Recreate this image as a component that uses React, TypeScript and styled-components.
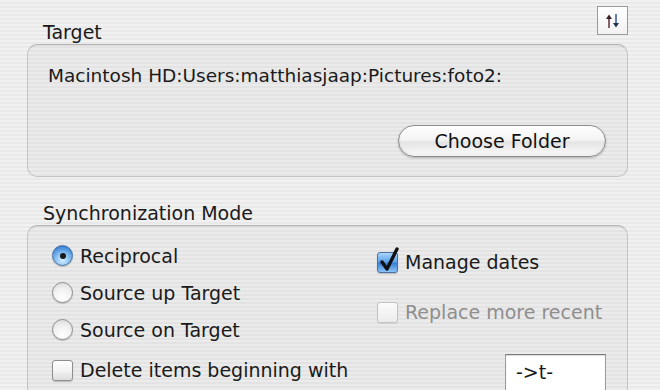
import React from "react";
import styled, { createGlobalStyle } from "styled-components";

const GlobalStyle = createGlobalStyle`
  html, body {
    margin: 0;
    padding: 0;
    height: 100%;
    overflow: hidden;
  }
  body {
    font-family: "DejaVu Sans", "Liberation Sans", sans-serif;
    background-color: #eeeeee;
    background-image: repeating-linear-gradient(
      to bottom,
      #f1f1f1 0px,
      #f1f1f1 2px,
      #e9e9e9 2px,
      #e9e9e9 4px
    );
    color: #1a1a1a;
  }
`;

const Page = styled.div`
  width: 601px;
  margin-left: 27px;
  padding-top: 6px;
  display: flex;
  flex-direction: column;
`;

const SectionHead = styled.div<{ h: number }>`
  display: flex;
  align-items: flex-end;
  justify-content: space-between;
  height: ${(p) => p.h}px;
  padding-left: 16px;
`;

const Label = styled.div`
  font-size: 19px;
  line-height: 20px;
  padding-bottom: 2px;
`;

const SortButton = styled.div`
  width: 29px;
  height: 27px;
  border: 1px solid #9a9a9a;
  background: linear-gradient(#ffffff, #f2f2f2);
  display: flex;
  align-items: center;
  justify-content: center;
  margin-bottom: 9px;
`;

const GroupBox = styled.div`
  border: 1px solid #c4c4c4;
  border-top-color: #b4b4b4;
  border-radius: 10px;
  background: rgba(0, 0, 0, 0.025);
  box-shadow: inset 0 1px 1px rgba(0, 0, 0, 0.06);
`;

const TargetBox = styled(GroupBox)`
  height: 133px;
  display: flex;
  flex-direction: column;
  justify-content: space-between;
  padding: 21px 20px 19px 20px;
  box-sizing: border-box;
`;

const PathText = styled.div`
  font-size: 18.5px;
  line-height: 20px;
`;

const AquaButton = styled.button`
  align-self: flex-end;
  width: 208px;
  height: 32px;
  border-radius: 16px;
  border: 1px solid #8c8c8c;
  background: linear-gradient(
    #ffffff 0%,
    #f4f4f4 45%,
    #e4e4e4 55%,
    #f6f6f6 90%,
    #ffffff 100%
  );
  box-shadow: 0 1px 2px rgba(0, 0, 0, 0.25),
    inset 0 -2px 3px rgba(0, 0, 0, 0.06);
  font-family: "DejaVu Sans", "Liberation Sans", sans-serif;
  font-size: 19px;
  color: #111;
  padding: 0;
  margin-right: 1px;
`;

const SyncBox = styled(GroupBox)`
  height: 200px;
  box-sizing: border-box;
  padding: 11px 20px 0 24px;
  display: grid;
  grid-template-columns: 325px 1fr;
  border-bottom-left-radius: 0;
  border-bottom-right-radius: 0;
`;

const Column = styled.div`
  display: flex;
  flex-direction: column;
`;

const Option = styled.div<{ disabled?: boolean; h: number }>`
  display: flex;
  align-items: center;
  gap: 7px;
  height: ${(p) => p.h}px;
  font-size: 19px;
  color: ${(p) => (p.disabled ? "#8e8e8e" : "#1a1a1a")};
`;

const RadioCircle = styled.span<{ on?: boolean }>`
  width: 21px;
  height: 21px;
  border-radius: 50%;
  box-sizing: border-box;
  flex: none;
  border: 1px solid ${(p) => (p.on ? "#4a6fa0" : "#8e8e8e")};
  background: ${(p) =>
    p.on
      ? "radial-gradient(circle at 50% 75%, #d6f0ff 0%, #7fbbf0 45%, #3d82d6 80%, #2a62b0 100%)"
      : "radial-gradient(circle at 50% 80%, #ffffff 0%, #f2f2f2 50%, #d6d6d6 100%)"};
  box-shadow: 0 1px 1px rgba(0, 0, 0, 0.2);
  display: flex;
  align-items: center;
  justify-content: center;
`;

const Dot = styled.span`
  width: 6px;
  height: 6px;
  border-radius: 50%;
  background: #1a1a1a;
`;

const CheckSquare = styled.span<{ on?: boolean; disabled?: boolean }>`
  position: relative;
  width: 21px;
  height: 21px;
  flex: none;
  box-sizing: border-box;
  border-radius: 3px;
  border: 1px solid
    ${(p) => (p.on ? "#4a6fa0" : p.disabled ? "#c2c2c2" : "#8e8e8e")};
  background: ${(p) =>
    p.on
      ? "linear-gradient(#a9d4fb 0%, #5fa3ea 45%, #3a80d8 55%, #8cc4f6 100%)"
      : p.disabled
      ? "linear-gradient(#fbfbfb, #ececec)"
      : "linear-gradient(#ffffff 0%, #f3f3f3 50%, #dcdcdc 100%)"};
  box-shadow: 0 1px 1px rgba(0, 0, 0, ${(p) => (p.disabled ? 0.08 : 0.2)});
`;

const CheckMark = styled.svg`
  position: absolute;
  left: 1px;
  top: -6px;
`;

const FieldRow = styled.div`
  display: flex;
  justify-content: flex-end;
  padding: 17px 1px 0 0;
`;

const TextField = styled.div`
  width: 101px;
  height: 40px;
  box-sizing: border-box;
  border: 1px solid #9a9a9a;
  border-top-color: #7a7a7a;
  background: #ffffff;
  box-shadow: inset 0 1px 1px rgba(0, 0, 0, 0.15);
  font-size: 19px;
  line-height: 20px;
  padding: 7px 0 0 10px;
`;

function SortIcon() {
  return (
    <svg width="18" height="16" viewBox="0 0 18 16">
      <path d="M5 15V3" stroke="#6b3b45" strokeWidth="1.6" />
      <path d="M2 6L5 1.5L8 6Z" fill="#3b2228" />
      <path d="M12 1V13" stroke="#3d5f9a" strokeWidth="1.6" />
      <path d="M9 10L12 14.5L15 10Z" fill="#1f2f52" />
    </svg>
  );
}

function Radio({ on, children }: { on?: boolean; children: string }) {
  return (
    <Option h={37}>
      <RadioCircle on={on}>{on && <Dot />}</RadioCircle>
      {children}
    </Option>
  );
}

function Check({
  on,
  disabled,
  h,
  children,
}: {
  on?: boolean;
  disabled?: boolean;
  h: number;
  children: string;
}) {
  return (
    <Option h={h} disabled={disabled}>
      <CheckSquare on={on} disabled={disabled}>
        {on && (
          <CheckMark width="22" height="26" viewBox="0 0 22 26">
            <path
              d="M3 15 L8 22 L18 2"
              fill="none"
              stroke="#111"
              strokeWidth="3.4"
              strokeLinecap="round"
              strokeLinejoin="round"
            />
          </CheckMark>
        )}
      </CheckSquare>
      {children}
    </Option>
  );
}

export default function App() {
  return (
    <>
      <GlobalStyle />
      <Page>
        <SectionHead h={38}>
          <Label>Target</Label>
          <SortButton>
            <SortIcon />
          </SortButton>
        </SectionHead>
        <TargetBox>
          <PathText>Macintosh HD:Users:matthiasjaap:Pictures:foto2:</PathText>
          <AquaButton>Choose Folder</AquaButton>
        </TargetBox>
        <SectionHead h={48}>
          <Label>Synchronization Mode</Label>
        </SectionHead>
        <SyncBox>
          <Column>
            <Radio on>Reciprocal</Radio>
            <Radio>Source up Target</Radio>
            <Radio>Source on Target</Radio>
            <Check h={44}>Delete items beginning with</Check>
          </Column>
          <Column>
            <Check on h={50}>
              Manage dates
            </Check>
            <Check disabled h={50}>
              Replace more recent
            </Check>
            <FieldRow>
              <TextField>-&gt;t-</TextField>
            </FieldRow>
          </Column>
        </SyncBox>
      </Page>
    </>
  );
}
